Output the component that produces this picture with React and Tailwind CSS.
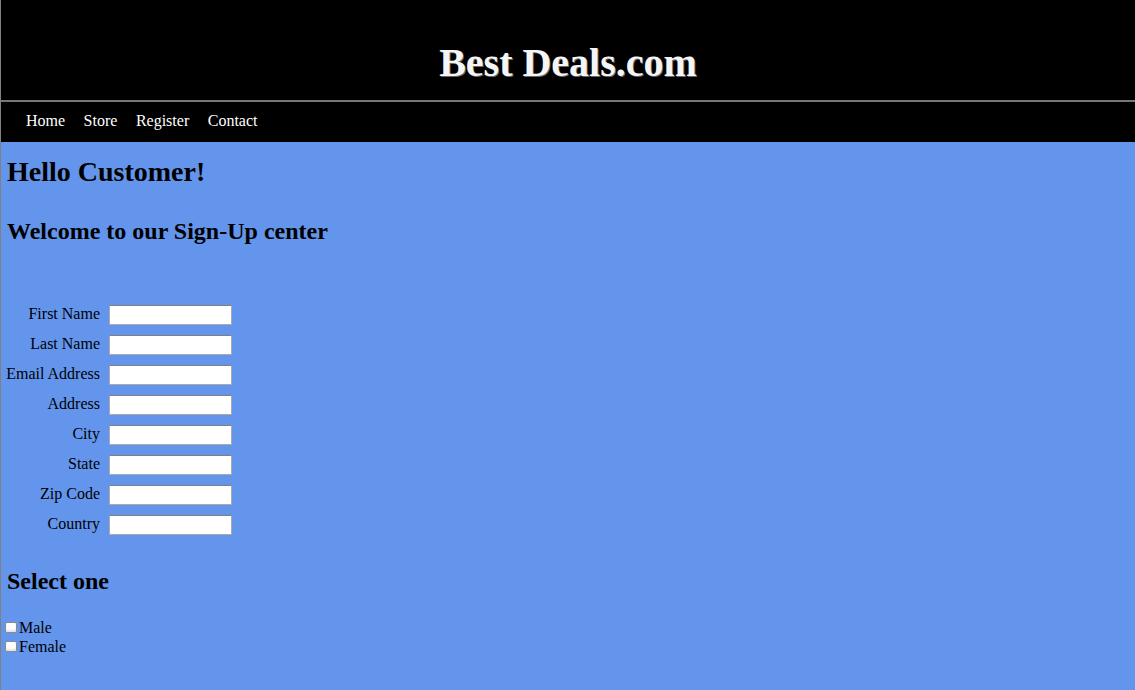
const fields = ['First Name', 'Last Name', 'Email Address', 'Address', 'City', 'State', 'Zip Code', 'Country']
const links = ['Home', 'Store', 'Register', 'Contact']

export default function App() {
  return (
    <div className="min-h-screen border-l border-[#808080] bg-[#6495ed] text-black font-['Liberation_Serif',serif]">
      <header className="h-[100px] bg-black pt-[41px] text-center">
        <h1 className="text-[40px] font-bold leading-[44px] text-[#f5f5f5] [text-shadow:1px_1px_0_#666]">
          Best Deals.com
        </h1>
      </header>
      <div className="h-[2px] bg-[#777]" />
      <nav className="flex h-[40px] items-center gap-[18.5px] bg-black pb-[2px] pl-[25px] text-[16px] text-white">
        {links.map((l) => (
          <a key={l} href="#" className="leading-[18px]">{l}</a>
        ))}
      </nav>

      <main>
        <h2 className="pl-[6px] pt-[14px] text-[28px] font-bold leading-[31px]">Hello Customer!</h2>
        <h3 className="mt-[31px] pl-[6px] text-[24px] font-bold leading-[27px]">Welcome to our Sign-Up center</h3>

        <div className="mt-[55px] grid grid-cols-[94px_123px] gap-x-[9px] pl-[5px] text-[16px]">
          {fields.map((f) => (
            <div key={f} className="contents">
              <label className="flex h-[30px] items-center justify-end whitespace-nowrap pb-[2px] leading-[18px]">{f}</label>
              <div className="flex h-[30px] items-center">
                <input
                  type="text"
                  className="h-[20px] w-[123px] border border-[#a9a9a9] border-t-[#808080] bg-white px-1 text-[13px] outline-none"
                />
              </div>
            </div>
          ))}
        </div>

        <h3 className="mt-[28px] pl-[6px] text-[24px] font-bold leading-[27px]">Select one</h3>

        <div className="mt-[23px] text-[16px]">
          {['Male', 'Female'].map((g) => (
            <label key={g} className="flex h-[19px] items-center">
              <input
                type="checkbox"
                className="ml-[4px] mr-[2px] h-[11px] w-[12px] appearance-none rounded-[2px] border border-[#8a8a8a] bg-white shadow-[inset_0_-2px_2px_#e4e4e4]"
              />
              <span className="leading-[18px]">{g}</span>
            </label>
          ))}
        </div>
      </main>
    </div>
  )
}
